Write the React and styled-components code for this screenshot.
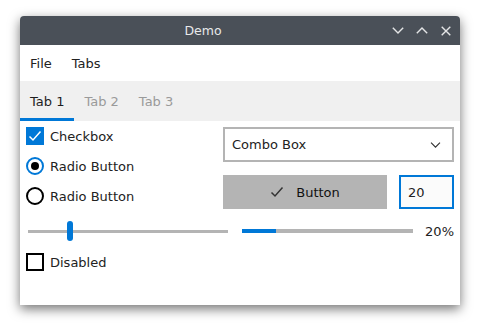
import React from 'react';
import styled, { createGlobalStyle } from 'styled-components';

const GlobalStyle = createGlobalStyle`
  html, body {
    margin: 0;
    padding: 0;
    background: #ffffff;
  }
  body {
    font-family: "DejaVu Sans", "Liberation Sans", sans-serif;
    font-size: 13px;
    color: #222222;
  }
`;

const Desktop = styled.div`
  width: 480px;
  height: 329px;
  padding: 16px 0 0 20px;
  box-sizing: border-box;
`;

const Window = styled.div`
  width: 440px;
  height: 289px;
  display: flex;
  flex-direction: column;
  background: #ffffff;
  border-radius: 4px 4px 0 0;
  box-shadow: 0 4px 12px rgba(0, 0, 0, 0.55);
  overflow: hidden;
`;

const TitleBar = styled.div`
  height: 29px;
  flex-shrink: 0;
  display: flex;
  align-items: center;
  background: #4a5058;
  color: #e8e9ea;
  padding-right: 2px;
`;

const Title = styled.div`
  flex: 1;
  text-align: center;
  font-size: 12.5px;
`;

const Controls = styled.div`
  display: flex;
`;

const ControlButton = styled.div`
  width: 24px;
  height: 29px;
  display: flex;
  align-items: center;
  justify-content: center;
`;

const MenuBar = styled.div`
  height: 36px;
  flex-shrink: 0;
  display: flex;
  align-items: center;
`;

const MenuItem = styled.div`
  padding: 0 10px;
`;

const TabBar = styled.div`
  height: 40px;
  flex-shrink: 0;
  display: flex;
  background: #f0f0f0;
`;

const Tab = styled.div`
  display: flex;
  align-items: center;
  padding: 0 10px;
  color: ${p => (p.$active ? '#1e1e1e' : '#9a9a9a')};
  box-shadow: ${p => (p.$active ? 'inset 0 -3px 0 #0078d7' : 'none')};
`;

const Content = styled.div`
  flex: 1;
  display: flex;
  flex-direction: column;
  gap: 12px;
  padding: 6px;
`;

const TopGrid = styled.div`
  display: grid;
  grid-template-columns: 1fr 231px;
  column-gap: 6px;
`;

const LeftColumn = styled.div`
  display: flex;
  flex-direction: column;
  gap: 12px;
`;

const RightColumn = styled.div`
  display: flex;
  flex-direction: column;
  gap: 13px;
`;

const CheckRow = styled.div`
  height: 18px;
  display: flex;
  align-items: center;
  gap: 6px;
`;

const Box = styled.div`
  width: 18px;
  height: 18px;
  box-sizing: border-box;
  display: flex;
  align-items: center;
  justify-content: center;
  background: ${p => (p.$checked ? '#0078d7' : '#ffffff')};
  border: ${p => (p.$checked ? 'none' : '2px solid #000000')};
`;

const Radio = styled.div`
  width: 18px;
  height: 18px;
  box-sizing: border-box;
  border-radius: 50%;
  border: 2px solid ${p => (p.$checked ? '#0078d7' : '#000000')};
  display: flex;
  align-items: center;
  justify-content: center;
`;

const RadioDot = styled.div`
  width: 8px;
  height: 8px;
  border-radius: 50%;
  background: #000000;
`;

const Combo = styled.div`
  height: 35px;
  box-sizing: border-box;
  border: 2px solid #b4b4b4;
  display: flex;
  align-items: center;
  justify-content: space-between;
  padding: 0 11px 0 7px;
`;

const ButtonRow = styled.div`
  display: flex;
  gap: 12px;
`;

const PushButton = styled.div`
  flex: 1;
  height: 34px;
  background: #b4b4b4;
  display: flex;
  align-items: center;
  justify-content: center;
  gap: 12px;
  color: #111111;
`;

const SpinBox = styled.div`
  width: 55px;
  height: 34px;
  box-sizing: border-box;
  border: 2px solid #0078d7;
  background: #fbfbfb;
  display: flex;
  align-items: center;
  padding-left: 7px;
`;

const SliderRow = styled.div`
  display: flex;
  align-items: center;
  gap: 12px;
  height: 20px;
`;

const Slider = styled.div`
  position: relative;
  width: 204px;
  height: 20px;
  flex-shrink: 0;
`;

const SliderTrack = styled.div`
  position: absolute;
  left: 2px;
  right: 2px;
  top: 9px;
  height: 3px;
  background: #b4b4b4;
`;

const SliderHandle = styled.div`
  position: absolute;
  top: 0;
  width: 6px;
  height: 20px;
  border-radius: 3px;
  background: #0078d7;
`;

const Progress = styled.div`
  flex: 1;
  height: 4px;
  background: #b4b4b4;
  margin-top: -1px;
`;

const ProgressFill = styled.div`
  height: 100%;
  background: #0078d7;
`;

const ProgressLabel = styled.div`
  flex-shrink: 0;
`;

const Chevron = ({ up, color = '#e4e5e6', w = 12, h = 7 }) => (
  <svg width={w} height={h} viewBox="0 0 12 7" fill="none">
    <path
      d={up ? 'M0.8 6.2 L6 1 L11.2 6.2' : 'M0.8 0.8 L6 6 L11.2 0.8'}
      stroke={color}
      strokeWidth="1.4"
    />
  </svg>
);

const CloseIcon = () => (
  <svg width="10" height="10" viewBox="0 0 10 10" fill="none">
    <path d="M0.7 0.7 L9.3 9.3 M9.3 0.7 L0.7 9.3" stroke="#e4e5e6" strokeWidth="1.4" />
  </svg>
);

const CheckMark = ({ color = '#ffffff', size = 14 }) => (
  <svg width={size} height={size} viewBox="0 0 14 14" fill="none">
    <path d="M1.5 7.5 L5 11 L12.5 2.5" stroke={color} strokeWidth="1.5" />
  </svg>
);

export default function App() {
  const sliderValue = 20;
  const progress = 20;

  return (
    <>
      <GlobalStyle />
      <Desktop>
        <Window>
          <TitleBar>
            <Title>Demo</Title>
            <Controls>
              <ControlButton><Chevron /></ControlButton>
              <ControlButton><Chevron up /></ControlButton>
              <ControlButton><CloseIcon /></ControlButton>
            </Controls>
          </TitleBar>

          <MenuBar>
            <MenuItem>File</MenuItem>
            <MenuItem>Tabs</MenuItem>
          </MenuBar>

          <TabBar>
            <Tab $active>Tab 1</Tab>
            <Tab>Tab 2</Tab>
            <Tab>Tab 3</Tab>
          </TabBar>

          <Content>
            <TopGrid>
              <LeftColumn>
                <CheckRow>
                  <Box $checked><CheckMark /></Box>
                  Checkbox
                </CheckRow>
                <CheckRow>
                  <Radio $checked><RadioDot /></Radio>
                  Radio Button
                </CheckRow>
                <CheckRow>
                  <Radio />
                  Radio Button
                </CheckRow>
              </LeftColumn>

              <RightColumn>
                <Combo>
                  Combo Box
                  <Chevron color="#333333" w={11} h={6} />
                </Combo>
                <ButtonRow>
                  <PushButton>
                    <CheckMark color="#333333" size={14} />
                    Button
                  </PushButton>
                  <SpinBox>20</SpinBox>
                </ButtonRow>
              </RightColumn>
            </TopGrid>

            <SliderRow>
              <Slider>
                <SliderTrack />
                <SliderHandle style={{ left: `${2 + (sliderValue / 100) * 194}px` }} />
              </Slider>
              <Progress>
                <ProgressFill style={{ width: `${progress}%` }} />
              </Progress>
              <ProgressLabel>{progress}%</ProgressLabel>
            </SliderRow>

            <CheckRow>
              <Box />
              Disabled
            </CheckRow>
          </Content>
        </Window>
      </Desktop>
    </>
  );
}
